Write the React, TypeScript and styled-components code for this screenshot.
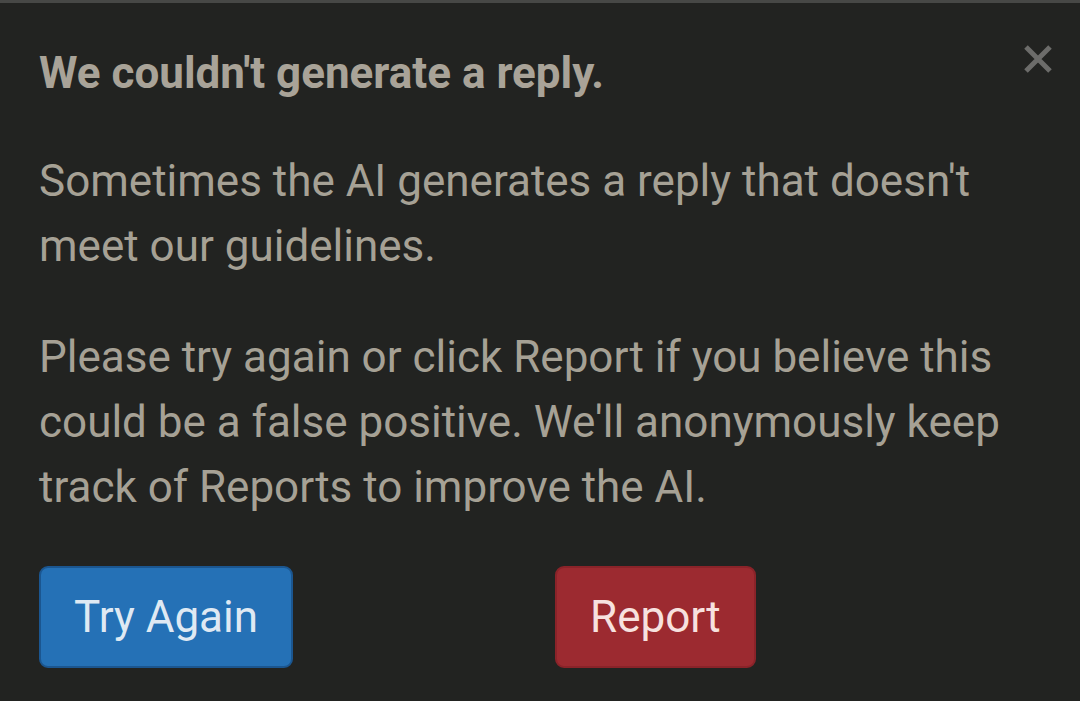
import * as React from 'react';
import { FC } from 'react';
import styled, { createGlobalStyle } from 'styled-components';

const GlobalStyle = createGlobalStyle`
  html, body {
    margin: 0;
    padding: 0;
    background: #222321;
  }
  body {
    font-family: Roboto, 'Liberation Sans', sans-serif;
  }
`;

const Dialog = styled.div`
  box-sizing: border-box;
  width: 1080px;
  height: 701px;
  background: #222321;
  border-top: 3px solid #474846;
  padding: 40px 40px 0 39px;
  position: relative;
  color: #a6a195;
`;

const Title = styled.h2`
  margin: 0;
  font-size: 44px;
  font-weight: 700;
  line-height: 60px;
  color: #a9a398;
`;

const Paragraph = styled.p`
  margin: 0;
  font-size: 44px;
  line-height: 65px;
  font-weight: 400;
`;

const Body = styled.div`
  display: flex;
  flex-direction: column;
  gap: 46px;
  margin-top: 46px;
`;

const CloseButton = styled.button`
  position: absolute;
  top: 40px;
  right: 26px;
  width: 32px;
  height: 32px;
  padding: 0;
  border: 0;
  background: transparent;
  cursor: pointer;
`;

const Actions = styled.div`
  display: flex;
  gap: 262px;
  margin-top: 46px;
`;

const ActionButton = styled.button<{ $tone: 'primary' | 'danger' }>`
  box-sizing: border-box;
  height: 102px;
  padding: 0 33px;
  border-radius: 9px;
  font-family: Roboto, 'Liberation Sans', sans-serif;
  font-size: 44px;
  font-weight: 400;
  cursor: pointer;
  background: ${(p) => (p.$tone === 'primary' ? '#2571b6' : '#9c2a30')};
  border: 2px solid ${(p) => (p.$tone === 'primary' ? '#1b5690' : '#8a2329')};
  color: ${(p) => (p.$tone === 'primary' ? '#dfe9f3' : '#f7e1df')};
`;

const App: FC = () => {
  return (
    <>
      <GlobalStyle />
      <Dialog>
        <CloseButton aria-label="Close">
          <svg width="32" height="32" viewBox="0 0 32 32">
            <path d="M4 4 L28 28 M28 4 L4 28" stroke="#6c6c6a" strokeWidth="5" />
          </svg>
        </CloseButton>
        <Title>We couldn't generate a reply.</Title>
        <Body>
          <Paragraph>Sometimes the AI generates a reply that doesn't meet our guidelines.</Paragraph>
          <Paragraph>
            Please try again or click Report if you believe this could be a false positive. We'll
            anonymously keep track of Reports to improve the AI.
          </Paragraph>
        </Body>
        <Actions>
          <ActionButton $tone="primary">Try Again</ActionButton>
          <ActionButton $tone="danger">Report</ActionButton>
        </Actions>
      </Dialog>
    </>
  );
};

export default App;
